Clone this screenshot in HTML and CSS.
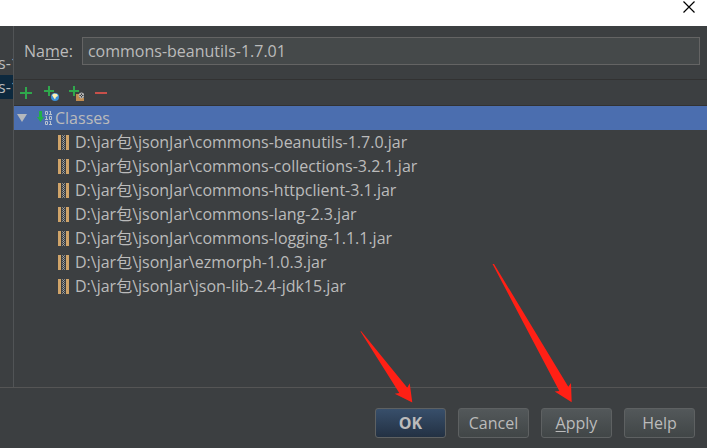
FILE: index.html
```html
<!DOCTYPE html>
<html lang="en">
<head>
    <meta charset="UTF-8">
    <meta name="viewport" content="width=device-width, initial-scale=1.0">
    <title>Project Structure</title>
    <link rel="stylesheet" href="styles.css">
</head>
<body>
    <header class="titlebar">
        <button class="close" type="button" aria-label="Close">
            <svg width="12" height="12" viewBox="0 0 12 12"><path d="M0.5 0.5L11.5 11.5M11.5 0.5L0.5 11.5" stroke="#000" stroke-width="1.2"/></svg>
        </button>
    </header>

    <div class="main">
        <ul class="sidebar">
            <li>s-1</li>
            <li class="active">s-1</li>
        </ul>

        <section class="editor">
            <div class="name-row">
                <label for="name">Na<u>m</u>e:</label>
                <input type="text" id="name" value="commons-beanutils-1.7.01">
            </div>

            <div class="toolbar">
                <button type="button" aria-label="Add">
                    <svg width="16" height="16" viewBox="0 0 16 16"><path d="M8 2v12M2 8h12" stroke="#2fa84c" stroke-width="2"/></svg>
                </button>
                <button type="button" aria-label="Attach URL">
                    <svg width="16" height="16" viewBox="0 0 16 16">
                        <path d="M6 1v10M1 6h10" stroke="#2fa84c" stroke-width="2"/>
                        <circle cx="12" cy="12" r="4" fill="#3c8fd8"/>
                        <path d="M9 10l2-1.500 3 0.500 1 2-2 1-1 2.500-1.500-2z" fill="#fff0b0"/>
                    </svg>
                </button>
                <button type="button" aria-label="Attach excluded roots">
                    <svg width="16" height="16" viewBox="0 0 16 16">
                        <path d="M6 1v10M1 6h10" stroke="#2fa84c" stroke-width="2"/>
                        <path d="M8 9h3v4h5v3H8z" fill="#c08a4e"/>
                        <circle cx="13.500" cy="10.500" r="2.500" fill="#3c3f41" stroke="#c9c9c9"/>
                        <path d="M12 9l3 3M15 9l-3 3" stroke="#c9c9c9" stroke-width="0.800"/>
                    </svg>
                </button>
                <button type="button" aria-label="Remove">
                    <svg width="16" height="16" viewBox="0 0 16 16"><path d="M2 8h12" stroke="#c7504a" stroke-width="2"/></svg>
                </button>
            </div>

            <div class="tree">
                <div class="tree-root">
                    <svg class="expander" width="10" height="8" viewBox="0 0 10 8"><path d="M0 0h10L5 8z" fill="#b4b8bd"/></svg>
                    <svg width="16" height="16" viewBox="0 0 16 16">
                        <path d="M2 1h3v6h2l-3.500 5L0 7h2z" fill="#22b04a"/>
                        <g fill="none" stroke="#b9c3cf">
                            <path d="M8.500 1.500h2v3h-2zM13.500 1v4M12.500 1.500h1M12 4.500h3"/>
                            <path d="M9.500 6v4M8.500 6.500h1M8 9.500h3M12.500 6.500h2v3h-2z"/>
                            <path d="M8.500 11.500h2v3h-2zM13.500 11v4M12.500 11.500h1M12 14.500h3"/>
                        </g>
                    </svg>
                    <span>Classes</span>
                </div>
                <ul class="jars">
                    <li><svg class="jar"><use href="#jar"/></svg>D:\jar包\jsonJar\commons-beanutils-1.7.0.jar</li>
                    <li><svg class="jar"><use href="#jar"/></svg>D:\jar包\jsonJar\commons-collections-3.2.1.jar</li>
                    <li><svg class="jar"><use href="#jar"/></svg>D:\jar包\jsonJar\commons-httpclient-3.1.jar</li>
                    <li><svg class="jar"><use href="#jar"/></svg>D:\jar包\jsonJar\commons-lang-2.3.jar</li>
                    <li><svg class="jar"><use href="#jar"/></svg>D:\jar包\jsonJar\commons-logging-1.1.1.jar</li>
                    <li><svg class="jar"><use href="#jar"/></svg>D:\jar包\jsonJar\ezmorph-1.0.3.jar</li>
                    <li><svg class="jar"><use href="#jar"/></svg>D:\jar包\jsonJar\json-lib-2.4-jdk15.jar</li>
                </ul>
            </div>
        </section>
    </div>

    <footer class="buttons">
        <button class="primary" type="button">OK</button>
        <button type="button">Cancel</button>
        <button type="button"><u>A</u>pply</button>
        <button type="button">Help</button>
    </footer>

    <!-- arrows pointing at OK and Apply -->
    <svg class="arrows" width="360" height="200" viewBox="347 248 360 200">
        <path d="M361 331L407.300 387.700L409.700 383.300L412.300 402.500L394.700 393.700L399.300 393L360.500 331.500z"/>
        <path d="M494 264L568.300 386.700L571 383L571.700 402.200L554.700 391.500L559.300 391L492.500 264z"/>
    </svg>

    <!-- shared icon of a jar archive -->
    <svg class="defs" width="0" height="0">
        <symbol id="jar" viewBox="0 0 11 15">
            <path d="M0 0h3v15H0zM8 0h3v15H8z" fill="#d0a469"/>
            <path d="M4.500 0v15" stroke="#85888a" stroke-dasharray="1 1"/>
            <path d="M5.500 1v14" stroke="#a9acae" stroke-dasharray="1 1"/>
            <path d="M6.500 0v15" stroke="#85888a" stroke-dasharray="1 1"/>
        </symbol>
    </svg>
</body>
</html>
```
FILE: styles.css
```css
* {
    box-sizing: border-box;
}

body {
    margin: 0;
    min-height: 100vh;
    display: flex;
    flex-direction: column;
    position: relative;
    overflow: hidden;
    background: #3c3f41;
    color: #bbbbbb;
    font-family: "Open Sans", "Noto Sans CJK SC", sans-serif;
    font-size: 16px;
    line-height: 24px;
}

ul {
    list-style: none;
    margin: 0;
    padding: 0;
}

button, input {
    font: inherit;
    color: inherit;
}

u {
    text-underline-offset: 2px;
}

.titlebar {
    display: flex;
    justify-content: flex-end;
    height: 26px;
    padding: 0 12px;
    background: #fff;
}

.close {
    display: flex;
    padding: 1px 0;
    border: none;
    background: none;
}

.main {
    flex: 1;
    display: flex;
    border-bottom: 1px solid #555555;
}

.sidebar {
    width: 14px;
    padding-top: 25px;
    border-right: 1px solid #515456;
    overflow: hidden;
    white-space: nowrap;
    text-indent: -2px;
}

.sidebar .active {
    background: #0d293e;
}

.editor {
    flex: 1;
    min-width: 0;
}

.name-row {
    display: flex;
    align-items: center;
    gap: 9px;
    padding: 11px 7px 14px 10px;
}

.name-row input {
    flex: 1;
    min-width: 0;
    height: 28px;
    padding: 0 5px;
    border: 1px solid #646464;
    background: #45494a;
}

.toolbar {
    display: flex;
    gap: 9px;
    height: 27px;
    padding: 0 4px;
    border-top: 1px solid #323232;
    border-bottom: 1px solid #323232;
}

.toolbar button {
    display: flex;
    align-items: center;
    padding: 0;
    border: none;
    background: none;
}

.tree-root {
    display: flex;
    align-items: center;
    gap: 2px;
    padding-left: 3px;
    background: #4b6eaf;
}

.expander {
    margin-right: 8px;
}

.jars li {
    display: flex;
    align-items: center;
    gap: 6px;
    padding-left: 44px;
}

.jar {
    width: 11px;
    height: 15px;
}

.buttons {
    display: flex;
    justify-content: flex-end;
    gap: 12px;
    padding: 20px 12px 10px;
}

.buttons button {
    width: 71px;
    height: 30px;
    padding: 0;
    border: 1px solid #5e6162;
    border-radius: 3px;
    background: linear-gradient(#53585a, #414647);
}

.buttons .primary {
    background: linear-gradient(#384f6b, #233143);
    font-weight: bold;
}

.arrows {
    position: absolute;
    right: 0;
    bottom: 0;
    fill: #ff2015;
    pointer-events: none;
}

.defs {
    position: absolute;
}
```
